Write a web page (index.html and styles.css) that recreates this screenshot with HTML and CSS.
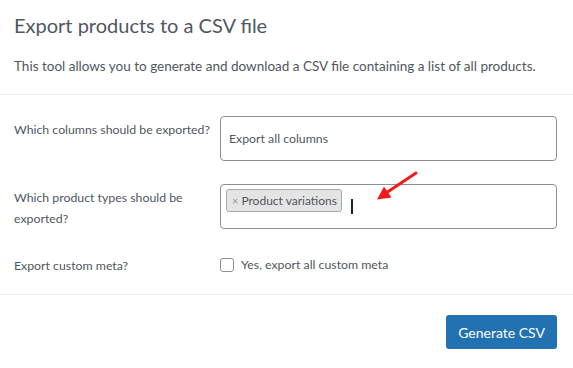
FILE: index.html
```html
<!DOCTYPE html>
<html lang="en">
<head>
    <meta charset="UTF-8">
    <meta name="viewport" content="width=device-width, initial-scale=1.0">
    <title>Export Products</title>
    <link rel="stylesheet" href="styles.css">
</head>
<body>
    <div class="exporter">
        <header class="exporter-header">
            <h2>Export products to a CSV file</h2>
            <p>This tool allows you to generate and download a CSV file containing a list of all products.</p>
        </header>
        <section class="exporter-options">
            <label class="option-label" for="columns">Which columns should be exported?</label>
            <div class="option-field">
                <div class="select-box" id="columns">Export all columns</div>
            </div>

            <label class="option-label" for="types">Which product types should be exported?</label>
            <div class="option-field">
                <div class="select-box multi" id="types">
                    <span class="tag"><span class="tag-remove">&times;</span>Product variations</span>
                    <span class="caret"></span>
                </div>
            </div>

            <label class="option-label" for="meta">Export custom meta?</label>
            <div class="option-field">
                <label class="check">
                    <input type="checkbox" id="meta">
                    <span>Yes, export all custom meta</span>
                </label>
            </div>
        </section>
        <footer class="exporter-actions">
            <button type="button" class="button-primary">Generate CSV</button>
        </footer>

        <!-- annotation arrow drawn over the screenshot -->
        <svg class="annotation" width="573" height="368" viewBox="0 0 573 368">
            <line x1="416" y1="173" x2="386" y2="193" stroke="#f21b1b" stroke-width="3" stroke-linecap="round"/>
            <polygon points="377,199.5 384,186.5 391.5,197.5" fill="#f21b1b"/>
        </svg>
    </div>
</body>
</html>
```

FILE: styles.css
```css
body {
    margin: 0;
    background-color: #fff;
    font-family: Lato, "Noto Sans", sans-serif;
    color: #50575e;
}
.exporter {
    position: relative;
    width: 573px;
    height: 368px;
    overflow: hidden;
}
.exporter-header {
    padding: 0 14px;
}
.exporter-header h2 {
    margin: 0;
    padding-top: 11px;
    font-size: 20px;
    font-weight: 400;
    line-height: 28px;
    color: #50575e;
}
.exporter-header p {
    margin: 17px 0 0;
    padding-bottom: 18px;
    font-size: 13.5px;
    line-height: 20px;
}
.exporter-options {
    display: grid;
    grid-template-columns: 206px 1fr;
    row-gap: 23px;
    padding: 21px 16px 18px 14px;
    border-top: 1px solid #eeeeee;
    border-bottom: 1px solid #eeeeee;
    font-size: 12.3px;
}
.option-label {
    padding-top: 3px;
    line-height: 21px;
}
.select-box {
    box-sizing: border-box;
    height: 45px;
    padding: 0 8px;
    border: 1px solid #8c8f94;
    border-radius: 4px;
    line-height: 43px;
    color: #50575e;
}
.select-box.multi {
    display: flex;
    align-items: flex-start;
    padding: 4px 5px;
    line-height: normal;
}
.tag {
    display: inline-flex;
    align-items: center;
    height: 23px;
    box-sizing: border-box;
    padding: 0 4px 0 5px;
    border: 1px solid #a7aaad;
    border-radius: 3px;
    background-color: #e4e4e4;
    font-size: 12px;
    color: #50575e;
}
.tag-remove {
    margin-right: 3px;
    font-size: 11px;
    color: #999;
}
.caret {
    width: 2px;
    height: 15px;
    margin: 10px 0 0 9px;
    background-color: #1d2327;
}
.check {
    display: flex;
    align-items: center;
    gap: 7px;
    padding-top: 5px;
}
.check input {
    appearance: none;
    width: 14px;
    height: 14px;
    margin: 0;
    border: 1px solid #8c8f94;
    border-radius: 3px;
    background: #fff;
}
.exporter-actions {
    display: flex;
    justify-content: flex-end;
    padding: 20px 16px;
}
.button-primary {
    height: 34px;
    padding: 0 12px;
    border: none;
    border-radius: 3px;
    background-color: #2271b1;
    color: #fff;
    font-family: inherit;
    font-size: 14px;
    cursor: pointer;
}
.annotation {
    position: absolute;
    left: 0;
    top: 0;
    pointer-events: none;
}
```
